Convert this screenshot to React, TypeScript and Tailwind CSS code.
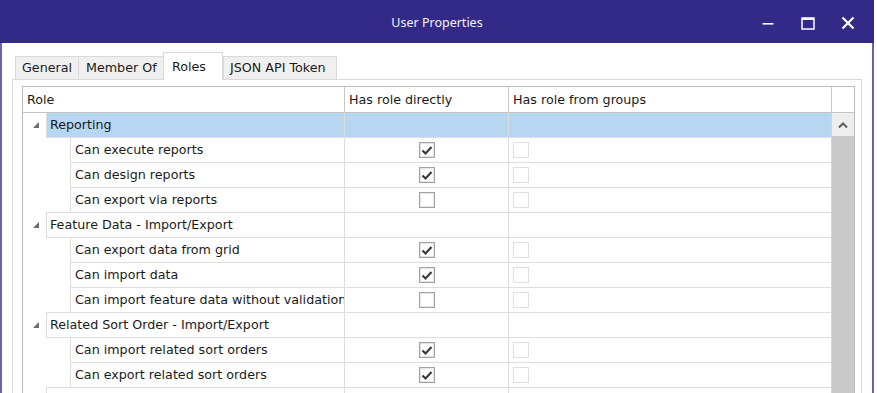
import React from 'react';

type Role = { label: string; direct: boolean };
type Group = { title: string; selected?: boolean; roles: Role[] };

const GROUPS: Group[] = [
  {
    title: 'Reporting',
    selected: true,
    roles: [
      { label: 'Can execute reports', direct: true },
      { label: 'Can design reports', direct: true },
      { label: 'Can export via reports', direct: false },
    ],
  },
  {
    title: 'Feature Data - Import/Export',
    roles: [
      { label: 'Can export data from grid', direct: true },
      { label: 'Can import data', direct: true },
      { label: 'Can import feature data without validation', direct: false },
    ],
  },
  {
    title: 'Related Sort Order - Import/Export',
    roles: [
      { label: 'Can import related sort orders', direct: true },
      { label: 'Can export related sort orders', direct: true },
    ],
  },
  { title: '', roles: [] },
];

function CheckBox({ checked, disabled }: { checked?: boolean; disabled?: boolean }) {
  if (disabled) {
    return <div className="w-[16px] h-[16px] border border-[#e0e0e0] bg-white" />;
  }
  return (
    <div className="w-[16px] h-[16px] border border-[#a2a2a2] bg-white shadow-[inset_0_0_0_1px_#e4e4e4] flex items-center justify-center">
      {checked && (
        <svg width="14" height="14" viewBox="0 0 14 14">
          <path d="M2.5 7.5 L5.5 10.5 L11.5 4" fill="none" stroke="#3a3a3a" strokeWidth="2.2" />
        </svg>
      )}
    </div>
  );
}

function Row({ indent, text, selected, group, direct }: {
  indent: number;
  text: string;
  selected?: boolean;
  group?: boolean;
  direct?: boolean;
}) {
  const bg = selected ? 'bg-[#b7d6f1]' : 'bg-white';
  return (
    <div className="flex h-[24px] shrink-0">
      <div className="shrink-0 flex items-center pl-[10px]" style={{ width: indent }}>
        {group && (
          <svg width="6" height="6" viewBox="0 0 6 6">
            <polygon points="6,0 6,6 0,6" fill="#6b6b6b" />
          </svg>
        )}
      </div>
      <div className={`flex-1 min-w-0 border-l border-[#dcdcdc] ${bg} flex items-center overflow-hidden whitespace-nowrap ${group ? 'pl-[3px]' : 'pl-[4px]'}`}>
        {text}
      </div>
      <div className={`w-[164px] border-l border-[#dcdcdc] ${bg} flex items-center justify-center pl-px`}>
        {!group && <CheckBox checked={direct} />}
      </div>
      <div className={`w-[323px] border-l border-[#dcdcdc] ${bg} flex items-center pl-[4px]`}>
        {!group && <CheckBox disabled />}
      </div>
    </div>
  );
}

function Line({ start }: { start: number }) {
  return <div className="h-px shrink-0 bg-[#dedede]" style={{ marginLeft: start }} />;
}

export default function App() {
  const rows: React.ReactNode[] = [];
  GROUPS.forEach((g, gi) => {
    rows.push(<Row key={`g${gi}`} indent={23} text={g.title} group selected={g.selected} />);
    rows.push(<Line key={`gl${gi}`} start={23} />);
    g.roles.forEach((r, ri) => {
      rows.push(<Row key={`r${gi}-${ri}`} indent={47} text={r.label} direct={r.direct} />);
      rows.push(<Line key={`rl${gi}-${ri}`} start={ri === g.roles.length - 1 ? 23 : 47} />);
    });
  });

  return (
    <div className="w-[877px] h-[393px] bg-white overflow-hidden text-[#1a1a1a]" style={{ fontFamily: '"DejaVu Sans", sans-serif' }}>
      <div className="w-[874px] h-[393px] flex flex-col">
        {/* Title bar */}
        <div className="h-[43px] shrink-0 bg-[#332a87] grid grid-cols-[1fr_auto_1fr] items-center pt-[3px] text-white">
          <div />
          <div className="text-[12.5px] text-[#f4f4ff]" style={{ fontFamily: '"Noto Sans", sans-serif' }}>
            User Properties
          </div>
          <div className="flex justify-end h-full pr-[6px]">
            <div className="w-[40px] flex items-center justify-center">
              <svg width="12" height="12" viewBox="0 0 12 12">
                <rect x="0.5" y="6" width="11" height="1.6" fill="white" />
              </svg>
            </div>
            <div className="w-[40px] flex items-center justify-center">
              <svg width="14" height="13" viewBox="0 0 14 13">
                <rect x="1" y="1" width="12" height="11" fill="none" stroke="white" strokeWidth="1.5" />
                <rect x="1" y="1" width="12" height="2" fill="white" />
              </svg>
            </div>
            <div className="w-[40px] flex items-center justify-center">
              <svg width="14" height="14" viewBox="0 0 14 14">
                <path d="M1.5 1.5 L12.5 12.5 M12.5 1.5 L1.5 12.5" stroke="white" strokeWidth="2.2" />
              </svg>
            </div>
          </div>
        </div>

        {/* Window body */}
        <div className="flex-1 min-h-0 flex flex-col border-l-2 border-r-2 border-[#6a62b4] bg-white">
          {/* Tabs */}
          <div className="mt-[9px] h-[27px] shrink-0 flex items-end pl-[13px] text-[12.7px]">
            <div className="w-[64px] h-[23px] border border-b-0 border-[#d9d9d9] bg-[#f0f0f0] flex items-center pl-[6px]">General</div>
            <div className="-ml-px w-[86px] h-[23px] border border-b-0 border-[#d9d9d9] bg-[#f0f0f0] flex items-center pl-[7px]">Member Of</div>
            <div className="-ml-px -mb-px relative z-10 w-[60px] h-[28px] border border-b-0 border-[#d9d9d9] bg-white flex items-start pl-[8px] pt-[4px]">Roles</div>
            <div className="w-[114px] h-[23px] border border-b-0 border-[#d9d9d9] bg-[#f0f0f0] flex items-center pl-[6px]">JSON API Token</div>
          </div>

          {/* Tab page */}
          <div className="flex-1 min-h-0 mx-[10px] border border-b-0 border-[#d9d9d9] pt-[6px] pl-[9px] pr-[6px] flex flex-col text-[12.7px]">
            <div className="flex-1 min-h-0 border border-b-0 border-[#bcbcbc] flex flex-col">
              {/* Header */}
              <div className="h-[26px] shrink-0 flex border-b border-[#c4c4c4]">
                <div className="w-[322px] border-r border-[#c8c8c8] flex items-center pl-[4px]">Role</div>
                <div className="w-[164px] border-r border-[#c8c8c8] flex items-center pl-[4px]">Has role directly</div>
                <div className="w-[323px] border-r border-[#c8c8c8] flex items-center pl-[4px]">Has role from groups</div>
                <div className="w-[22px]" />
              </div>

              {/* Body */}
              <div className="flex-1 min-h-0 flex overflow-hidden">
                <div className="w-[808px] flex flex-col">{rows}</div>
                <div className="w-[23px] flex flex-col border-l border-[#d4d4d4]">
                  <div className="h-[23px] shrink-0 bg-[#eeeeee] flex items-center justify-center">
                    <svg width="10" height="6" viewBox="0 0 10 6">
                      <path d="M1 5.5 L5 1.5 L9 5.5" fill="none" stroke="#5c5c5c" strokeWidth="2" />
                    </svg>
                  </div>
                  <div className="flex-1 bg-[#c9c9c9]" />
                </div>
              </div>
            </div>
          </div>
        </div>
      </div>
    </div>
  );
}
